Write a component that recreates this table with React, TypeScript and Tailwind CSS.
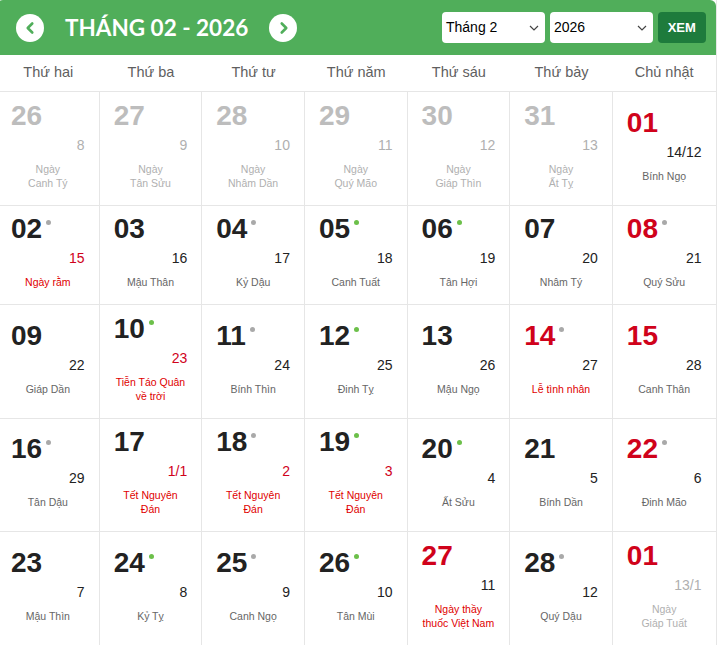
import { ChevronLeft, ChevronRight } from "lucide-react";

type Cell = {
  d: string;
  lunar: string;
  text: string[];
  kind?: "prev" | "next";
  red?: boolean;
  lunarRed?: boolean;
  textRed?: boolean;
  dot?: "gray" | "green";
};

const weekdays = ["Thứ hai", "Thứ ba", "Thứ tư", "Thứ năm", "Thứ sáu", "Thứ bảy", "Chủ nhật"];

const cells: Cell[] = [
  { d: "26", lunar: "8", text: ["Ngày", "Canh Tý"], kind: "prev" },
  { d: "27", lunar: "9", text: ["Ngày", "Tân Sửu"], kind: "prev" },
  { d: "28", lunar: "10", text: ["Ngày", "Nhâm Dần"], kind: "prev" },
  { d: "29", lunar: "11", text: ["Ngày", "Quý Mão"], kind: "prev" },
  { d: "30", lunar: "12", text: ["Ngày", "Giáp Thìn"], kind: "prev" },
  { d: "31", lunar: "13", text: ["Ngày", "Ất Tỵ"], kind: "prev" },
  { d: "01", lunar: "14/12", text: ["Bính Ngọ"], red: true },

  { d: "02", lunar: "15", text: ["Ngày rằm"], lunarRed: true, textRed: true, dot: "gray" },
  { d: "03", lunar: "16", text: ["Mậu Thân"] },
  { d: "04", lunar: "17", text: ["Kỷ Dậu"], dot: "gray" },
  { d: "05", lunar: "18", text: ["Canh Tuất"], dot: "green" },
  { d: "06", lunar: "19", text: ["Tân Hợi"], dot: "green" },
  { d: "07", lunar: "20", text: ["Nhâm Tý"] },
  { d: "08", lunar: "21", text: ["Quý Sửu"], red: true, dot: "gray" },

  { d: "09", lunar: "22", text: ["Giáp Dần"] },
  { d: "10", lunar: "23", text: ["Tiễn Táo Quân về trời"], lunarRed: true, textRed: true, dot: "green" },
  { d: "11", lunar: "24", text: ["Bính Thìn"], dot: "gray" },
  { d: "12", lunar: "25", text: ["Đinh Tỵ"], dot: "green" },
  { d: "13", lunar: "26", text: ["Mậu Ngọ"] },
  { d: "14", lunar: "27", text: ["Lễ tình nhân"], red: true, textRed: true, dot: "gray" },
  { d: "15", lunar: "28", text: ["Canh Thân"], red: true },

  { d: "16", lunar: "29", text: ["Tân Dậu"], dot: "gray" },
  { d: "17", lunar: "1/1", text: ["Tết Nguyên Đán"], lunarRed: true, textRed: true },
  { d: "18", lunar: "2", text: ["Tết Nguyên Đán"], lunarRed: true, textRed: true, dot: "gray" },
  { d: "19", lunar: "3", text: ["Tết Nguyên Đán"], lunarRed: true, textRed: true, dot: "green" },
  { d: "20", lunar: "4", text: ["Ất Sửu"], dot: "green" },
  { d: "21", lunar: "5", text: ["Bính Dần"] },
  { d: "22", lunar: "6", text: ["Đinh Mão"], red: true, dot: "gray" },

  { d: "23", lunar: "7", text: ["Mậu Thìn"] },
  { d: "24", lunar: "8", text: ["Kỷ Tỵ"], dot: "green" },
  { d: "25", lunar: "9", text: ["Canh Ngọ"], dot: "gray" },
  { d: "26", lunar: "10", text: ["Tân Mùi"], dot: "green" },
  { d: "27", lunar: "11", text: ["Ngày thầy thuốc Việt Nam"], red: true, textRed: true },
  { d: "28", lunar: "12", text: ["Quý Dậu"], dot: "gray" },
  { d: "01", lunar: "13/1", text: ["Ngày", "Giáp Tuất"], kind: "next", red: true },
];

function SelectBox({ value }: { value: string }) {
  return (
    <div className="flex h-[31px] w-[103px] items-center justify-between rounded-[4px] bg-white pl-[4px] pr-[6px] text-[14px] text-black">
      <span>{value}</span>
      <svg width="10" height="6" viewBox="0 0 10 6" fill="none">
        <polyline points="1,1 5,5 9,1" stroke="#444" strokeWidth="1.2" />
      </svg>
    </div>
  );
}

function DayCell({ c, last }: { c: Cell; last: boolean }) {
  const muted = !!c.kind;
  let dayColor = "text-[#222]";
  if (c.kind === "prev") dayColor = "text-[#bdbdbd]";
  if (c.red) dayColor = "text-[#d0021b]";

  let lunarColor = "text-[#222]";
  if (muted) lunarColor = "text-[#b0b0b0]";
  if (c.lunarRed) lunarColor = "text-[#d0021b]";

  let textColor = "text-[#666]";
  if (muted) textColor = "text-[#b0b0b0]";
  if (c.textRed) textColor = "text-[#e00000]";

  return (
    <div
      className={
        "flex flex-col justify-center border-b border-[#e6e6e6] px-[14px] pt-[7.5px] pb-[15px]" +
        (last ? "" : " border-r")
      }
    >
      <div className="h-[32px] leading-[32px]">
        <span className={"relative inline-block text-[28px] font-bold " + dayColor}>
          {c.d}
          {c.dot && (
            <span
              className={
                "absolute left-full top-[7px] ml-[4px] h-[5px] w-[5px] rounded-full " +
                (c.dot === "green" ? "bg-[#6cc04a]" : "bg-[#a9a9a9]")
              }
            />
          )}
        </span>
      </div>
      <div className={"mt-[3px] text-right text-[14px] leading-[20px] " + lunarColor}>{c.lunar}</div>
      <div className={"mt-[7px] text-center text-[10.5px] leading-[14px] " + textColor}>
        {c.text.map((t, i) => (
          <div key={i}>{t}</div>
        ))}
      </div>
    </div>
  );
}

export default function App() {
  return (
    <div className="min-h-[645px] bg-white font-['Liberation_Sans',Arial,sans-serif]">
      <div className="ml-[-3px] w-[719.5px] border-r border-[#e6e6e6]">
        {/* thanh tiêu đề */}
        <div className="flex h-[55px] items-center rounded-t-md bg-[#50ae5a] pl-[19px] pr-[10px]">
          <button className="flex h-[28px] w-[28px] items-center justify-center rounded-full bg-white">
            <ChevronLeft size={18} strokeWidth={3.5} color="#50ae5a" className="-ml-[1px]" />
          </button>
          <div className="mx-[21px] font-['Lato',sans-serif] text-[22.5px] font-bold text-white">
            THÁNG 02 - 2026
          </div>
          <button className="flex h-[28px] w-[28px] items-center justify-center rounded-full bg-white">
            <ChevronRight size={18} strokeWidth={3.5} color="#50ae5a" className="ml-[1px]" />
          </button>
          <div className="ml-auto flex items-center gap-[5px]">
            <SelectBox value="Tháng 2" />
            <SelectBox value="2026" />
            <button className="h-[31px] w-[47.5px] rounded-[4px] bg-[#1e7b3c] text-[13px] font-bold text-white">
              XEM
            </button>
          </div>
        </div>

        {/* tên thứ */}
        <div className="grid h-[37px] grid-cols-7 border-b border-[#e6e6e6]">
          {weekdays.map((w) => (
            <div key={w} className="flex items-center justify-center pb-[1px] text-[14.5px] text-[#5f5f5f]">
              {w}
            </div>
          ))}
        </div>

        {/* lưới ngày */}
        <div className="grid grid-cols-7">
          {cells.map((c, i) => (
            <DayCell key={i} c={c} last={i % 7 === 6} />
          ))}
        </div>
      </div>
    </div>
  );
}
